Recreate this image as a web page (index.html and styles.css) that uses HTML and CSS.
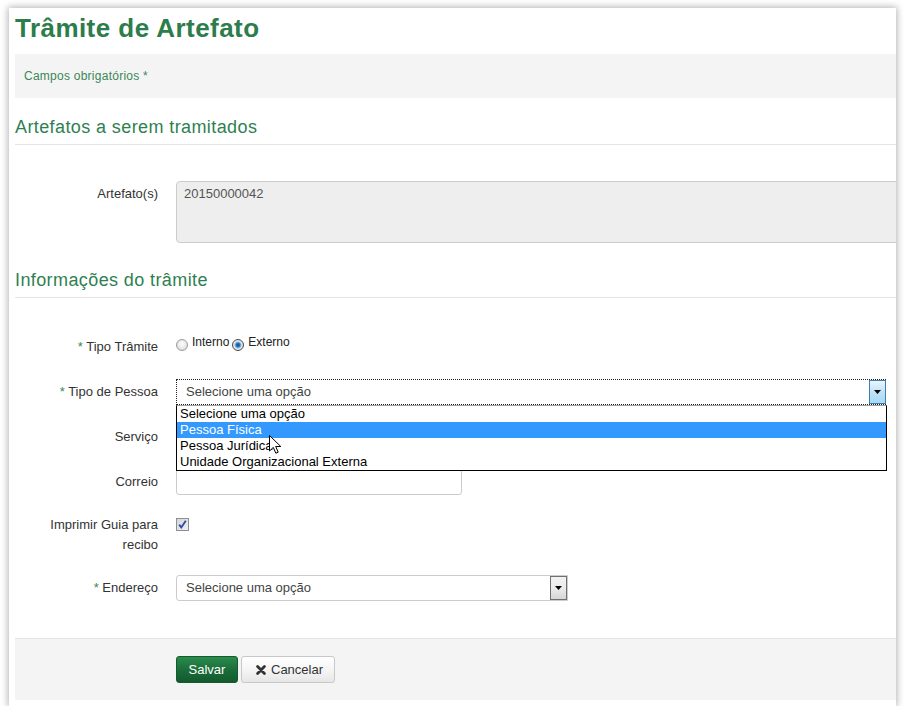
FILE: index.html
```html
<!DOCTYPE html>
<html lang="pt">
<head>
<meta charset="utf-8">
<title>Trâmite de Artefato</title>
<link rel="stylesheet" href="styles.css">
</head>
<body>
<div class="panel">
  <h1 class="title">Trâmite de Artefato</h1>
  <div class="required">Campos obrigatórios *</div>

  <h2 class="section">Artefatos a serem tramitados</h2>
  <div class="row row-artefato">
    <label class="lbl">Artefato(s)</label>
    <div class="field"><div class="textarea">20150000042</div></div>
  </div>

  <h2 class="section section-2">Informações do trâmite</h2>
  <div class="row row-tipo">
    <label class="lbl"><span class="req">*</span> Tipo Trâmite</label>
    <div class="field radios">
      <span class="radio"></span><span class="radio-text">Interno</span>
      <span class="radio checked"></span><span class="radio-text radio-text-2">Externo</span>
    </div>
  </div>

  <div class="row row-pessoa">
    <label class="lbl"><span class="req">*</span> Tipo de Pessoa</label>
    <div class="field">
      <div class="select-wrap">
        <div class="select focus">
          <span class="select-text">Selecione uma opção</span>
          <span class="arrow arrow-open"><svg width="7" height="4" viewBox="0 0 7 4"><path d="M0 0H7L3.5 4Z" fill="#000"/></svg></span>
        </div>
        <ul class="options">
          <li>Selecione uma opção</li>
          <li class="hl">Pessoa Física</li>
          <li>Pessoa Jurídica</li>
          <li>Unidade Organizacional Externa</li>
          <li class="cursor"><svg width="13" height="19" viewBox="0 0 13 19"><path d="M0.5 0.5V16L4.3 12.4L6.8 18.2L9.2 17.2L6.7 11.5H11.8Z" fill="#fff" stroke="#000" stroke-width="1" stroke-linejoin="miter"/></svg></li>
        </ul>
      </div>
    </div>
  </div>

  <div class="row row-servico">
    <label class="lbl">Serviço</label>
    <div class="field"><div class="input"></div></div>
  </div>

  <div class="row row-correio">
    <label class="lbl">Correio</label>
    <div class="field"><div class="input"></div></div>
  </div>

  <div class="row row-imprimir">
    <label class="lbl">Imprimir Guia para recibo</label>
    <div class="field">
      <span class="checkbox"><svg width="11" height="11" viewBox="0 0 11 11"><path d="M2.2 5.6L4.3 8.4L8.8 1.8" fill="none" stroke="#2f4a9e" stroke-width="1.8"/></svg></span>
    </div>
  </div>

  <div class="row row-endereco">
    <label class="lbl"><span class="req">*</span> Endereço</label>
    <div class="field">
      <div class="select select-plain">
        <span class="select-text">Selecione uma opção</span>
        <span class="arrow arrow-gray"><svg width="7" height="4" viewBox="0 0 7 4"><path d="M0 0H7L3.5 4Z" fill="#000"/></svg></span>
      </div>
    </div>
  </div>

  <div class="actions">
    <button class="btn btn-save" type="button">Salvar</button>
    <button class="btn btn-cancel" type="button"><svg class="x-icon" width="10" height="10" viewBox="0 0 10 10"><path d="M1.6 1.6L8.4 8.4M8.4 1.6L1.6 8.4" stroke="#333" stroke-width="2.8" stroke-linecap="round"/></svg>Cancelar</button>
  </div>
</div>
</body>
</html>
```

FILE: styles.css
```css
body {
  margin: 0;
  background: #fff;
  font-family: "Liberation Sans", Arial, sans-serif;
  color: #333;
}

.panel {
  position: relative;
  margin: 8px 0 0 9px;
  width: 887px;
  height: 698px;
  box-sizing: border-box;
  padding: 5px 0 0 6px;
  background: #fff;
  box-shadow: 0 0 7px 1px rgba(0, 0, 0, 0.3);
  overflow: hidden;
}

.title {
  margin: 0;
  font-size: 26px;
  line-height: 30px;
  font-weight: bold;
  letter-spacing: 0.45px;
  color: #2d7c4b;
}

.required {
  margin-top: 11px;
  height: 44px;
  line-height: 44px;
  padding-left: 9px;
  background: #f4f4f4;
  font-size: 12px;
  letter-spacing: 0.25px;
  color: #3a8757;
}

.section {
  margin: 18px 0 0;
  font-size: 18px;
  line-height: 22px;
  font-weight: normal;
  letter-spacing: 0.4px;
  color: #2f7f52;
  padding-bottom: 6px;
  border-bottom: 1px solid #e5e5e5;
}

.section-2 {
  margin-top: 26px;
}

.row {
  display: grid;
  grid-template-columns: 143px 1fr;
  column-gap: 18px;
  align-items: start;
}

.lbl {
  text-align: right;
  font-size: 13px;
  line-height: 20px;
  padding-top: 3px;
  color: #333;
}

.req {
  color: #3a8757;
}

.field {
  min-width: 0;
}

.row-artefato { margin-top: 36px; }
.row-tipo { margin-top: 36px; }
.row-pessoa { margin-top: 22px; position: relative; z-index: 2; }
.row-servico { margin-top: 19px; }
.row-correio { margin-top: 19px; }
.row-imprimir { margin-top: 17px; }
.row-endereco { margin-top: 20px; }

.textarea {
  width: 740px;
  height: 62px;
  box-sizing: border-box;
  border: 1px solid #ccc;
  border-radius: 4px;
  background: #eee;
  padding: 4px 7px;
  font-size: 13px;
  line-height: 16px;
  color: #555;
}

.radios {
  display: flex;
  align-items: flex-start;
  font-size: 12px;
  line-height: 16px;
  color: #222;
}

.radio {
  flex: none;
  width: 12px;
  height: 12px;
  box-sizing: border-box;
  margin-top: 5px;
  border-radius: 50%;
  border: 1px solid #9a9a9a;
  background: radial-gradient(circle at 50% 40%, #fdfdfd 0, #e6e6e6 60%, #cfcfcf 100%);
}

.radio.checked {
  margin-left: 3px;
  border-color: #4a4a4a;
  background: radial-gradient(circle, #0f4f8f 0, #2a79c4 2px, #8fc3ea 3px, #e8e8e8 4px, #d0d0d0 100%);
}

.radio-text {
  margin-left: 4px;
}

.select-wrap {
  position: relative;
  width: 710px;
}

.select {
  display: flex;
  align-items: stretch;
  height: 26px;
  box-sizing: border-box;
  background: #fff;
  font-size: 13px;
  line-height: 24px;
  color: #444;
}

.select.focus {
  border: 1px dotted #222;
}

.select-plain {
  width: 392px;
  border: 1px solid #ccc;
  border-radius: 3px 0 0 3px;
}

.select-text {
  flex: 1;
  padding-left: 9px;
  white-space: nowrap;
}

.arrow {
  flex: none;
  width: 17px;
  box-sizing: border-box;
  display: flex;
  align-items: center;
  justify-content: center;
}

.arrow-open {
  border: 1px solid #3c7fb1;
  background: linear-gradient(#eaf6fd, #bfe3f8 50%, #a7d8f4);
  margin-right: -1px;
}

.arrow-gray {
  border: 1px solid #707070;
  background: linear-gradient(#f2f2f2, #ebebeb 50%, #d6d6d6);
}

.options {
  position: absolute;
  top: 26px;
  left: 0;
  width: 711px;
  box-sizing: border-box;
  margin: 0;
  padding: 0;
  list-style: none;
  background: #fff;
  border: 1px solid #000;
  border-top-color: #a0a0a0;
  font-size: 13px;
  line-height: 16px;
  color: #000;
}

.options li {
  padding-left: 3px;
  height: 16px;
  white-space: nowrap;
}

.options li.hl {
  background: #3399ff;
  color: #fff;
}

.options li.cursor {
  position: absolute;
  left: 92px;
  top: 29px;
  padding: 0;
  height: auto;
  line-height: 0;
}

.input {
  width: 286px;
  height: 26px;
  box-sizing: border-box;
  border: 1px solid #ccc;
  border-radius: 3px;
  background: #fff;
}

.checkbox {
  display: flex;
  align-items: center;
  justify-content: center;
  width: 13px;
  height: 13px;
  box-sizing: border-box;
  margin-top: 6px;
  border: 1px solid #8f8f8f;
  background: linear-gradient(135deg, #d2d6de, #eef0f4);
}

.actions {
  margin-top: 37px;
  border-top: 1px solid #e5e5e5;
  background: #f4f4f4;
  padding: 17px 0 17px 161px;
  display: flex;
  gap: 3px;
}

.btn {
  height: 27px;
  box-sizing: border-box;
  font-family: "Liberation Sans", Arial, sans-serif;
  font-size: 13px;
  line-height: 25px;
  border-radius: 3px;
  padding: 0 12px;
  display: flex;
  align-items: center;
}

.btn-save {
  width: 62px;
  justify-content: center;
  color: #fff;
  border: 1px solid #145a2f;
  background: linear-gradient(#2b8b4c, #1a6b39 55%, #125a2d);
}

.btn-cancel {
  width: 94px;
  padding-left: 14px;
  color: #333;
  border: 1px solid #c8c8c8;
  background: linear-gradient(#ffffff, #f3f3f3 60%, #e6e6e6);
}

.x-icon {
  margin-right: 5px;
  flex: none;
}
```
